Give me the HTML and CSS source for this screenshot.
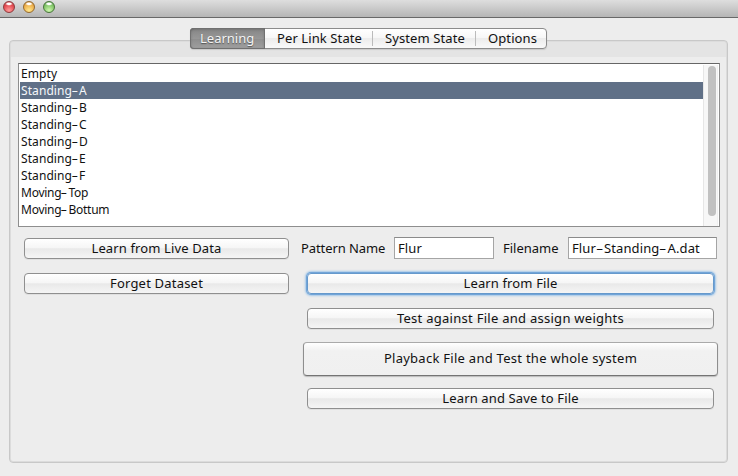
FILE: index.html
```html
<!DOCTYPE html>
<html lang="en">
<head>
<meta charset="utf-8">
<title>Learning</title>
<link rel="stylesheet" href="styles.css">
</head>
<body>
<header class="titlebar"><span class="light red"></span><span class="light amber"></span><span class="light green"></span></header>
<main>
  <nav class="tabs">
    <button class="tab active">Learning</button>
    <button class="tab link">Per Link State</button>
    <button class="tab system">System State</button>
    <button class="tab options">Options</button>
  </nav>
  <section class="pane">
    <div class="listbox">
      <ul class="list">
        <li>Empty</li>
        <li class="selected">Standing<i>-</i>A</li>
        <li>Standing<i>-</i>B</li>
        <li>Standing<i>-</i>C</li>
        <li>Standing<i>-</i>D</li>
        <li>Standing<i>-</i>E</li>
        <li>Standing<i>-</i>F</li>
        <li class="moving">Moving<i>-</i>Top</li>
        <li class="moving">Moving<i>-</i>Bottum</li>
      </ul>
      <div class="scrollbar"><div class="thumb"></div></div>
    </div>
    <div class="controls">
      <div class="left">
        <button class="btn">Learn from Live Data</button>
        <button class="btn forget">Forget Dataset</button>
      </div>
      <div class="right">
        <div class="fields">
          <label class="l-pattern">Pattern Name</label>
          <div class="field pattern">Flur</div>
          <label class="l-file">Filename</label>
          <div class="field file">Flur<i>-</i>Standing<i>-</i>A.dat</div>
        </div>
        <button class="btn focused">Learn from File</button>
        <button class="btn wide-text">Test against File and assign weights</button>
        <button class="btn tall wide-text">Playback File and Test the whole system</button>
        <button class="btn">Learn and Save to File</button>
      </div>
    </div>
  </section>
</main>
</body>
</html>
```
FILE: styles.css
```css
* { box-sizing: border-box; }
body {
  margin: 0;
  width: 738px;
  height: 476px;
  overflow: hidden;
  background: #ededed;
  color: #111;
  font: 13px/19px "Noto Sans", "Open Sans", sans-serif;
}
button { font: inherit; color: inherit; padding: 0; margin: 0; white-space: nowrap; }
i { display: inline-block; font-style: normal; width: 8px; transform: scaleX(1.75); transform-origin: 0 50%; letter-spacing: 0; }

.titlebar {
  display: flex;
  gap: 8px;
  height: 18px;
  padding: 1px 0 0 3px;
  background: linear-gradient(#dedede, #b5b5b5);
  border-bottom: 1px solid #686868;
}
.light {
  width: 12px;
  height: 12px;
  border-radius: 50%;
  border: 1px solid;
}
.red { border-color: #8d3a3c; background: radial-gradient(ellipse 4px 2px at 50% 18%, #fff 40%, transparent), radial-gradient(circle at 50% 85%, #ff9b9b, #e44a50 60%, #b93840); }
.amber { border-color: #94692d; background: radial-gradient(ellipse 4px 2px at 50% 18%, #fff 40%, transparent), radial-gradient(circle at 50% 85%, #ffe78c, #eeb04c 60%, #bd7d2e); }
.green { border-color: #47743a; background: radial-gradient(ellipse 4px 2px at 50% 18%, #fff 40%, transparent), radial-gradient(circle at 50% 85%, #cdf6ad, #82c668 60%, #55964a); }

main { padding: 10px 10px 0 9px; }
.tabs {
  position: relative;
  display: flex;
  width: 357px;
  height: 21px;
  margin: 0 0 -9px 181px;
  border: 1px solid #8b8b8b;
  border-radius: 4px;
  background: linear-gradient(#fff, #f7f7f7 45%, #ececec 50%, #f9f9f9);
  box-shadow: 0 1px 1px #c9c9c9;
}
.tab { position: relative; border: 0; background: none; line-height: 19px; text-align: left; }
.tab + .tab + .tab::before { content: ""; position: absolute; left: 0; top: 2px; width: 1px; height: 15px; background: #bbb; }
.tab.active {
  width: 75px;
  height: 21px;
  margin: -1px 0 -1px -1px;
  padding: 0 0 1px 10px;
  line-height: 20px;
  color: #f4f4f4;
  text-shadow: 0 1px 1px #555;
  border-radius: 4px 0 0 4px;
  background: linear-gradient(#858585, #979797 50%, #8f8f8f 55%, #a0a0a0);
  box-shadow: inset 0 0 0 1px #707070, inset 0 1px 3px #606060;
}
.link { width: 107px; padding-left: 12px; letter-spacing: 0.1px; }
.system { width: 103px; padding-left: 13px; letter-spacing: 0.1px; }
.options { padding-left: 13px; letter-spacing: 0.1px; }

.pane {
  height: 423px;
  padding: 22px 7px 0 8px;
  border: 1px solid #c8c8c8;
  border-radius: 4px;
  box-shadow: inset 0 0 0 1px #dcdcdc;
  background: linear-gradient(#e4e4e4 16px, #ededed 16px);
}
.listbox {
  display: flex;
  width: 702px;
  height: 164px;
  padding: 1px 0 0 1px;
  border: 1px solid #8e8e8e;
  border-top-color: #666;
  background: #fff;
}
.list {
  width: 683px;
  margin: 0;
  padding: 0;
  list-style: none;
  font-size: 12px;
  line-height: 17px;
}
.list li { height: 17px; padding-left: 1px; letter-spacing: 0.08px; }
.list i { width: 7px; transform: translateX(-0.5px) scaleX(1.7); }
.list .moving { letter-spacing: -0.25px; }
.list .selected { background: #607087; color: #f5f7fa; }
.scrollbar { width: 15px; padding: 1px 3px 0 4px; background: #f7f7f7; border-left: 1px solid #e6e6e6; border-right: 1px solid #f0f0f0; }
.thumb { width: 8px; height: 150px; border-radius: 4px; background: #c1c1c1; }

.controls { display: flex; padding-left: 6px; }
.left { width: 265px; padding-top: 11px; display: flex; flex-direction: column; gap: 14px; }
.btn {
  display: block;
  height: 21px;
  border: 1px solid #8f8f8f;
  border-radius: 4px;
  background: linear-gradient(#fff, #f6f6f6 45%, #e9e9e9 52%, #f5f5f5);
  line-height: 19px;
  text-align: center;
  letter-spacing: 0.13px;
  box-shadow: 0 1px 0 #e0e0e0;
}
.forget { letter-spacing: 0.2px; }
.wide-text { letter-spacing: 0.27px; }
.right { width: 416px; margin-left: 12px; padding-top: 10px; display: flex; flex-direction: column; }
.right .btn { width: 407px; margin: 14px 0 0 6px; }
.fields { display: flex; height: 22px; line-height: 22px; }
.l-pattern { width: 93px; letter-spacing: -0.08px; }
.l-file { width: 65px; margin-left: 9px; }
.field { height: 22px; padding-left: 3px; line-height: 20px; background: #fff; border: 1px solid #a5a5a5; border-top-color: #8b8b8b; white-space: nowrap; letter-spacing: 0.12px; }
.field.pattern { width: 100px; }
.field.file { width: 149px; }
.right .focused { border-color: #6699cc; box-shadow: 0 0 0 1px #72a5d8, 0 0 2px 2px #a5c8e9; }
.right .tall {
  width: 415px;
  height: 34px;
  margin: 13px 0 -2px 2px;
  padding-bottom: 2px;
  line-height: 30px;
  border-color: #aaa #8e8e8e #747474;
  background: linear-gradient(#fff, #f1f1f1 25%, #f0f0f0);
  box-shadow: 0 1px 1px #bbb;
}
```
